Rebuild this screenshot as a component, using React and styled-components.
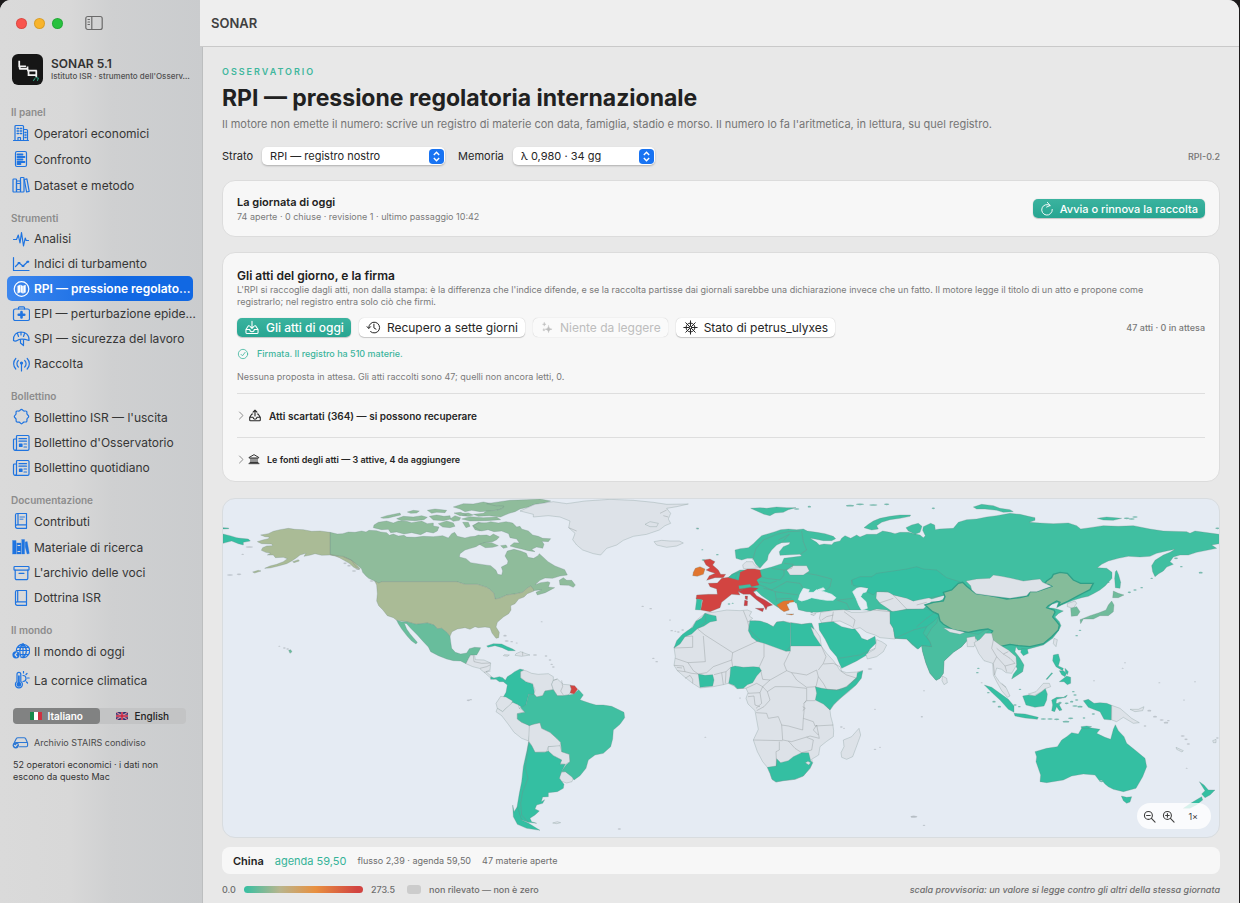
import React, { useState } from "react";
import styled, { createGlobalStyle } from "styled-components";

const GlobalStyle = createGlobalStyle`
  * {
    box-sizing: border-box;
  }
  html, body, #root {
    height: 100%;
  }
  body {
    margin: 0;
    background: #1c1a1b;
    font-family: Inter, "Liberation Sans", sans-serif;
    color: #262626;
    overflow: hidden;
  }
  button, select {
    font: inherit;
    color: inherit;
    border: 0;
    margin: 0;
    padding: 0;
    background: none;
  }
  h1, h2, h3, p {
    margin: 0;
  }
`;

/* ---------- icons ---------- */

const glyphs = {
  building: (
    <>
      <path d="M3 16.5V2.5a1 1 0 0 1 1-1h6.500a1 1 0 0 1 1 1v14M11.500 5.500h3a1 1 0 0 1 1 1v10M1.500 16.500h15M6 16.500v-3h2.500v3" />
      <path d="M5.200 4.500h1.300M8.300 4.500h1.300M5.200 7h1.300M8.300 7h1.300M5.200 9.500h1.300M8.300 9.500h1.300M13 8.500h1M13 11h1M13 13.500h1" strokeWidth="1.500" />
    </>
  ),
  doc: (
    <>
      <rect x="3.500" y="1.500" width="11" height="15" rx="1.500" />
      <path d="M5.500 4.500h5M5.500 7h7M5.500 9.500h5M5.500 12h7M5.500 14h3" strokeWidth="1.800" />
    </>
  ),
  books: (
    <>
      <rect x="1" y="3" width="3.500" height="13" rx=".8" />
      <rect x="4.500" y="5" width="4" height="11" rx=".8" />
      <rect x="8.500" y="1.500" width="3.500" height="14.500" rx=".8" />
      <path d="M12.300 3.500l2.600-.6 2.300 12.500-2.600.6zM5.500 7.500h2M5.500 13.500h2" />
    </>
  ),
  booksFill: (
    <>
      <path d="M.5 2.500h3.600V16H.5zM4.800 5h4.200V16H4.800zM9.700 1.500H12.600V16H9.700zM13.200 4l2-.4L17.300 15.500l-2.200.5L13.200 9z" fill="currentColor" strokeWidth=".3" />
      <path d="M6 7.500h1.800M6 13.500h1.800" stroke="#dcdcdc" />
    </>
  ),
  pulse: <path d="M1.500 9.500h3L6.300 5l1.700 8L9.500 2.500l2 13.500 1.700-8 1 2.500h2.300" />,
  chart: (
    <>
      <path d="M1.500 2.500v13h15.500M3.500 11.500l3.500-3.500 4 3 5-4.500" />
      <path d="M6.500 8h1M10.500 11h1M15.300 6.700h1" strokeWidth="2" />
    </>
  ),
  mapCircle: (
    <>
      <circle cx="9.500" cy="9" r="7.300" />
      <path d="M5.700 6l2.300-.9v7.200l-2.300.9zM8.700 5.100l2 .9v7.200l-2-.9zM11.300 6l2.200-.9v7.200l-2.200.9z" fill="currentColor" strokeWidth=".4" />
    </>
  ),
  medkit: (
    <>
      <rect x="1.500" y="4" width="16" height="11.500" rx="1.800" />
      <path d="M6.500 4V2.800a1 1 0 0 1 1-1h4a1 1 0 0 1 1 1V4" />
      <path d="M9.500 7v5.500M6.700 9.700h5.600" strokeWidth="2.600" />
    </>
  ),
  helmet: (
    <>
      <path d="M1.500 10.500C1 5 4.500 2 9 2s8.500 3 8 8.500M1.500 10.500c2 1.500 3.500 0 5-.8 3-1.200 6-.7 10.500.8M5.500 3.500l1 3M12.500 3.500l-1 3M9 2v3" />
      <path d="M8.500 10v3l3 2.500v-5.500" />
    </>
  ),
  antenna: (
    <>
      <path d="M9.500 9v7M6.300 12a4.500 4.500 0 0 1 0-6.500M12.700 12a4.500 4.500 0 0 0 0-6.500M3.800 14a7.500 7.500 0 0 1 0-10.500M15.200 14a7.500 7.500 0 0 0 0-10.500" />
      <circle cx="9.500" cy="8" r="1" fill="currentColor" />
    </>
  ),
  seal: (
    <path d="M9.500 1.300c1 0 1.400 1.400 2.300 1.700s2.100-.4 2.800.3 0 1.900.4 2.800 1.700 1.300 1.700 2.400-1.400 1.500-1.700 2.400.4 2.100-.4 2.800-1.900 0-2.800.4-1.300 1.700-2.300 1.700-1.400-1.400-2.300-1.700-2.100.4-2.800-.4 0-1.900-.4-2.800-1.700-1.300-1.700-2.400 1.400-1.500 1.700-2.400-.4-2.100.4-2.800 1.900 0 2.800-.3 1.300-1.700 2.300-1.700z" />
  ),
  news: (
    <>
      <path d="M4.500 14.500v-12a1 1 0 0 1 1-1h10.500a1 1 0 0 1 1 1v12.500a1.300 1.300 0 0 1-1.300 1.300H3.300A1.800 1.800 0 0 1 1.500 14.500V6a1 1 0 0 1 1-1h2" />
      <path d="M4.500 14.500a1.500 1.500 0 0 1-1.500 1.800M7 4.700h7.500M7 7.200h7.500M12 10h2.500M12 13h2.500" />
      <path d="M7.500 10h2.500v2.500H7.500z" fill="currentColor" />
    </>
  ),
  contrib: (
    <>
      <path d="M5 1.500h9.500v11.300H5A1.500 1.500 0 0 0 3.500 14.300V3A1.500 1.500 0 0 1 5 1.500zM3.500 14.500A1.700 1.700 0 0 0 5.200 16.300h9.300v-3.500M6 1.500v11" />
      <path d="M8 5h4.500M8 7.200h3" strokeWidth=".9" />
    </>
  ),
  archive: (
    <>
      <rect x="2" y="2.500" width="15" height="3.700" rx=".8" />
      <path d="M3.200 6.200v8a1.500 1.500 0 0 0 1.500 1.500h9.600a1.500 1.500 0 0 0 1.500-1.500v-8M7 9.300h5" />
    </>
  ),
  book: (
    <path d="M5 1.500h9.500v11.300H5A1.500 1.500 0 0 0 3.500 14.300V3A1.500 1.500 0 0 1 5 1.500zM3.500 14.500A1.700 1.700 0 0 0 5.200 16.300h9.300v-3.500M5.700 1.500v11" />
  ),
  globe: (
    <>
      <path d="M4.300 9A6.700 6.700 0 1 1 9 15.300M4.300 8.500h13M5.500 5.300h11M8 12.500h8.500M11 1.700v14M11 1.700c-4.500 4-3.500 9-2 13M11 1.700c4.500 4 4.500 10 0 14" />
      <circle cx="4" cy="12.800" r="3.600" fill="currentColor" stroke="none" />
      <path d="M4.700 11l-1.700 1.800 1.700 1.700" stroke="#dcdcdc" />
    </>
  ),
  thermo: (
    <>
      <path d="M5 10.500V3.200a1.900 1.900 0 0 1 3.800 0v7.300a3.500 3.500 0 1 1-3.800 0z" />
      <circle cx="6.900" cy="13.400" r="1.800" fill="currentColor" />
      <path d="M6.900 5v7" strokeWidth="1.700" />
      <path d="M11 4.500a3 3 0 0 1 0 6M11.500.5v1.500M15 2.500l-1 1M15.500 7h1.700M14.500 11l1 1" />
    </>
  ),
  drive: (
    <>
      <path d="M2.500 9l2-4a2 2 0 0 1 1.700-1h6.600a2 2 0 0 1 1.700 1l2 4.500v2.700a1.300 1.300 0 0 1-1.300 1.300H8M4 9h12" />
      <circle cx="4" cy="12" r="3.300" fill="currentColor" stroke="none" />
      <path d="M2.600 12l1 1 1.800-2" stroke="#dcdcdc" />
    </>
  ),
  sidebar: (
    <>
      <rect x=".8" y="2.500" width="16.400" height="13" rx="2" />
      <path d="M6.800 2.500v13M3 5.500h1.500M3 8h1.500M3 10.500h1.500" />
    </>
  ),
  trayDown: (
    <>
      <path d="M6 6.500H5L2.200 10.700v3.500a1 1 0 0 0 1 1h11.600a1 1 0 0 0 1-1v-3.500L13 6.500h-1M2.200 10.700h4.300a2.500 2.500 0 0 0 5 0h4.300" />
      <path d="M9 1.500v8M6.800 7.300L9 9.500l2.200-2.200" />
    </>
  ),
  trayUp: (
    <>
      <path d="M6 6.500H5L2.200 10.700v3.500a1 1 0 0 0 1 1h11.600a1 1 0 0 0 1-1v-3.500L13 6.500h-1M2.200 10.700h4.300a2.500 2.500 0 0 0 5 0h4.300" />
      <path d="M9 9V1.500M6.500 4L9 1.500 11.500 4" />
    </>
  ),
  history: <path d="M3.300 9.500A6.500 6.500 0 1 1 5.500 14M1.300 8l2 2.300L5.500 8M9.500 5v4.500l2.500 1.500" />,
  sparkle: (
    <g fill="currentColor" strokeWidth=".5">
      <path d="M11 6c.5 3 1.500 4 4.500 4.500-3 .5-4 1.500-4.500 4.500-.5-3-1.500-4-4.500-4.500 3-.5 4-1.500 4.500-4.500zM5.500 2c.3 1.500.8 2 2.300 2.300-1.500.3-2 .8-2.300 2.300-.3-1.500-.8-2-2.300-2.300 1.500-.3 2-.8 2.300-2.300zM5 10c.2 1 .5 1.300 1.500 1.500-1 .2-1.300.5-1.500 1.500-.2-1-.5-1.300-1.500-1.500 1-.2 1.300-.5 1.500-1.500z" />
    </g>
  ),
  helm: (
    <>
      <circle cx="9" cy="9" r="5.300" />
      <circle cx="9" cy="9" r="1.700" />
      <path d="M9 1v6.300M9 10.700V17M1 9h6.300M10.700 9H17M3.300 3.300l4.500 4.500M10.200 10.200l4.500 4.500M14.700 3.300l-4.500 4.500M7.800 10.200l-4.500 4.500" />
    </>
  ),
  refresh: <path d="M13 4.500A6.800 6.800 0 1 0 15.800 9.500M9.500.5l3.500 4-4.500 2" />,
  check: (
    <>
      <circle cx="9" cy="9" r="7" />
      <path d="M6 9.500l2.200 2.200L12.200 6.500" />
    </>
  ),
  bank: (
    <>
      <path d="M2 6.500L9 2.500l7 4v1H2zM1.500 16h15M3 14.200h12" />
      <path d="M4.500 8v5.500M7.500 8v5.500M10.500 8v5.500M13.500 8v5.500" />
    </>
  ),
  chevron: <path d="M5 2l7 7-7 7" />,
  zoomOut: (
    <>
      <circle cx="7.500" cy="7.500" r="5.500" />
      <path d="M11.700 11.700l5 5M5 7.500h5" />
    </>
  ),
  zoomIn: (
    <>
      <circle cx="7.500" cy="7.500" r="5.500" />
      <path d="M11.700 11.700l5 5M5 7.500h5M7.500 5v5" />
    </>
  ),
};

function Icon({ name, size = 18, weight = 1.2 }) {
  return (
    <Glyph viewBox="0 0 18 18" width={size} height={size} strokeWidth={weight} aria-hidden="true">
      {glyphs[name]}
    </Glyph>
  );
}

/* ---------- sidebar ---------- */

const groups = [
  {
    title: "Il panel",
    items: [
      { icon: "building", label: "Operatori economici", height: 26 },
      { icon: "doc", label: "Confronto", height: 26 },
      { icon: "books", label: "Dataset e metodo", height: 26 },
    ],
  },
  {
    title: "Strumenti",
    items: [
      { icon: "pulse", label: "Analisi" },
      { icon: "chart", label: "Indici di turbamento" },
      { icon: "mapCircle", label: "RPI — pressione regolato…" },
      { icon: "medkit", label: "EPI — perturbazione epide…" },
      { icon: "helmet", label: "SPI — sicurezza del lavoro" },
      { icon: "antenna", label: "Raccolta" },
    ],
  },
  {
    title: "Bollettino",
    items: [
      { icon: "seal", label: "Bollettino ISR — l'uscita", height: 26 },
      { icon: "news", label: "Bollettino d'Osservatorio" },
      { icon: "news", label: "Bollettino quotidiano" },
    ],
  },
  {
    title: "Documentazione",
    items: [
      { icon: "contrib", label: "Contributi", height: 26 },
      { icon: "booksFill", label: "Materiale di ricerca", height: 26 },
      { icon: "archive", label: "L'archivio delle voci" },
      { icon: "book", label: "Dottrina ISR" },
    ],
  },
  {
    title: "Il mondo",
    items: [
      { icon: "globe", label: "Il mondo di oggi", height: 26 },
      { icon: "thermo", label: "La cornice climatica", height: 32 },
    ],
  },
];

function Sidebar() {
  const [active, setActive] = useState("RPI — pressione regolato…");
  const [lang, setLang] = useState("it");

  return (
    <Side>
      <WindowBar>
        <Light color="#f9544d" aria-label="Chiudi" />
        <Light color="#f8b42c" aria-label="Riduci" />
        <Light color="#28c13e" aria-label="Ingrandisci" />
        <ToggleSide aria-label="Barra laterale">
          <Icon name="sidebar" size={18} />
        </ToggleSide>
      </WindowBar>

      <Brand>
        <Logo viewBox="0 0 30 30" aria-hidden="true">
          <rect width="30" height="30" rx="6" fill="#161616" />
          <path d="M7 6.500v5.500h6.500M7 14.500h8l.5 1.500h8.500M15 12v3M7.500 12v2.500M16 16v4.500h8M23.500 16v6.500" fill="none" stroke="#f2f2f2" strokeWidth="1.700" />
          <path d="M20.500 26l2-2.500M23 22.500l2.500 1-1 2.500" fill="none" stroke="#2f9c7d" />
        </Logo>
        <BrandText>
          <h2>SONAR 5.1</h2>
          <p>Istituto ISR · strumento dell'Osserv…</p>
        </BrandText>
      </Brand>

      <nav>
        {groups.map((group) => (
          <Group key={group.title}>
            <h3>{group.title}</h3>
            {group.items.map((item) => (
              <Item
                key={item.label}
                $height={item.height}
                $active={item.label === active}
                onClick={() => setActive(item.label)}
              >
                <Icon name={item.icon} />
                <span>{item.label}</span>
              </Item>
            ))}
          </Group>
        ))}
      </nav>

      <Languages>
        <Segment $on={lang === "it"} aria-pressed={lang === "it"} onClick={() => setLang("it")}>
          <svg viewBox="0 0 12 8" width="12" height="8" aria-hidden="true">
            <path d="M0 0h4v8H0z" fill="#168a4b" />
            <path d="M4 0h4v8H4z" fill="#fff" />
            <path d="M8 0h4v8H8z" fill="#cf3040" />
          </svg>
          Italiano
        </Segment>
        <Segment $on={lang === "en"} aria-pressed={lang === "en"} onClick={() => setLang("en")}>
          <svg viewBox="0 0 12 8" width="12" height="8" aria-hidden="true">
            <path d="M0 0h12v8H0z" fill="#2b2f6d" />
            <path d="M0 0l12 8M12 0L0 8" stroke="#d28a9d" strokeWidth="1.200" />
            <path d="M6 0v8M0 4h12" stroke="#dcb3c0" strokeWidth="2.300" />
            <path d="M6 0v8M0 4h12" stroke="#c4203d" strokeWidth="1.500" />
          </svg>
          English
        </Segment>
      </Languages>

      <Shared>
        <Icon name="drive" size={17} />
        Archivio STAIRS condiviso
      </Shared>
      <SideNote>52 operatori economici · i dati non escono da questo Mac</SideNote>
    </Side>
  );
}

/* ---------- world map ---------- */

const tone = {
  none: "#dde2e8",
  low: "#34bfa2",
  russia: "#40bfa1",
  india: "#4abea0",
  mexico: "#68bd9c",
  japan: "#70bb9b",
  canada: "#8fbc9b",
  china: "#85bc9a",
  usa: "#aabb96",
  orange: "#e1752f",
  red: "#d24441",
  italy: "#cb3d43",
  sea: "#e5ebf3",
};

// each sheet has its own origin, shapes are listed bottom to top
const sheets = [
  {
    at: [0, 0],
    shapes: [
      ["low", "9,117 30,122 50,128 62,130 85,132 91,138 70,142 70,150 55,146 35,138 20,142 9,145"],
      ["low", "9,98 26,99 26,101 9,102"],
      ["canada", "330,112 352,117 368,116 385,111 405,112 425,108 438,111 447,106 470,107 482,111 500,113 508,121 520,117 535,123 552,121 560,126 585,127 610,124 640,125 668,122 685,129 695,116 704,112 712,124 735,129 750,125 765,124 775,120 782,121 800,120 810,124 820,117 838,126 830,134 818,140 800,142 780,148 768,155 752,160 735,165 720,176 718,186 738,191 752,203 790,209 812,212 828,226 833,238 845,240 848,228 844,216 862,207 864,198 855,183 862,168 882,163 902,168 919,175 924,187 941,190 954,182 958,176 968,185 984,200 1005,213 1034,224 1042,240 1020,243 998,250 975,249 960,256 945,269 962,263 984,260 990,263 985,276 1004,278 976,293 952,300 948,292 965,284 940,287 932,273 918,282 908,292 884,297 860,300 838,310 825,312 822,295 808,282 800,277 772,268 735,268 710,260 485,260 478,266 462,257 446,250 438,243 428,232 425,222 412,210 395,198 378,188 355,184 330,179"],
      ["canada", "1018,256 1030,248 1040,256 1055,256 1066,270 1060,277 1046,271 1020,270"],
      ["canada", "462,90 475,82 500,78 520,84 535,78 560,79 575,83 605,78 622,86 640,84 640,93 657,96 652,108 640,114 620,110 602,119 575,113 552,117 530,111 512,113 505,103 485,104 460,98"],
      ["canada", "482,68 500,62 525,57 540,54 542,60 520,65 505,69 490,70"],
      ["canada", "530,71 550,64 580,66 605,62 622,67 612,74 585,77 560,76 545,77"],
      ["canada", "562,51 580,46 598,48 590,54 572,55"],
      ["canada", "622,46 645,42 680,46 675,53 650,52 635,55"],
      ["canada", "628,64 650,60 672,64 690,62 692,72 670,77 640,75"],
      ["canada", "655,86 680,78 700,84 705,94 690,98 668,96"],
      ["canada", "690,72 705,62 722,68 718,76 700,79"],
      ["canada", "700,36 730,26 760,27 790,21 815,26 830,32 850,28 858,35 838,44 810,48 780,50 755,46 735,50 720,42"],
      ["canada", "725,72 750,65 790,68 830,66 842,74 800,77 750,78"],
      ["canada", "720,56 745,54 760,60 745,64 728,62"],
      ["canada", "758,92 775,82 795,86 800,98 780,108 765,104"],
      ["canada", "728,82 745,82 750,94 738,98"],
      ["canada", "702,54 722,52 740,60 720,62"],
      ["canada", "800,26 840,20 870,16 920,14 960,12 992,18 970,25 940,29 925,36 900,42 885,50 868,55 855,60 842,66 808,62 775,64 760,58 790,55 800,48 830,46 848,40 852,33 825,32"],
      ["canada", "758,92 775,84 800,83 812,80 835,84 858,80 878,84 890,96 900,94 905,102 925,108 938,120 955,124 968,130 992,131 985,140 966,139 972,148 968,160 950,156 935,163 945,170 925,167 905,162 888,158 870,153 882,143 898,144 890,132 870,128 866,116 845,108 822,110 804,104 785,108 770,100"],
      ["canada", "778,148 795,142 815,143 835,152 818,157 796,158"],
      ["canada", "842,152 858,150 862,157 850,160"],
      ["usa", "330,112 300,108 275,109 250,104 225,103 205,100 180,104 160,109 145,116 122,120 135,125 148,126 145,131 128,135 112,140 125,146 155,147 158,152 140,153 128,158 124,166 137,172 152,175 142,180 160,180 166,188 190,187 202,191 190,200 170,208 150,213 134,220 150,219 175,213 200,206 215,198 230,188 240,180 258,175 252,184 272,180 285,176 305,181 330,180 345,183 358,188 372,196 388,205 400,216 414,224 420,222 408,206 392,194 370,184 355,183 330,178"],
      ["usa", "218,200 235,194 238,198 222,203"],
      ["usa", "98,231 115,226 123,228 104,234"],
      ["usa", "485,260 710,260 735,268 772,268 800,277 808,282 822,295 825,312 838,310 860,300 884,297 908,292 918,282 932,273 940,282 942,288 922,296 912,306 896,312 885,326 872,332 873,345 866,356 850,366 832,382 828,396 838,412 836,428 828,430 816,414 810,398 795,396 775,398 765,395 750,403 735,398 712,402 696,410 690,424 680,412 665,400 652,401 642,390 622,384 588,388 560,380 530,376 520,368 502,362 488,344 476,332 470,318 472,296 470,270 464,258 476,264"],
      ["mexico", "530,376 545,380 560,380 588,388 622,384 642,390 652,401 665,400 680,412 690,424 692,440 695,460 706,472 722,477 740,474 748,461 764,457 782,458 776,470 770,480 752,480 746,490 738,506 722,498 700,497 680,492 655,482 632,470 625,456 610,440 592,420 572,400 560,386 553,385 560,402 570,416 580,428 592,442 588,447 575,438 562,424 545,402 535,386"],
      ["none", "746,490 752,480 764,482 766,494 792,495 812,504 810,525 798,530 815,545 822,552 812,549 796,535 778,520 758,515 738,506"],
      ["low", "812,545 822,549 838,545 848,548 856,556 862,545 874,538 884,530 900,522 912,525 902,530 902,548 918,560 938,566 942,585 945,602 926,598 918,630 912,642 895,630 870,622 850,606 858,592 862,570 850,560 838,560 828,553 812,553"],
      ["low", "800,453 820,446 845,447 862,455 878,462 886,467 865,467 846,458 825,452 804,457"],
      ["none", "888,476 902,470 918,476 930,480 905,484 885,481"],
      ["none", "853,479 868,480 862,484 850,482"],
      ["none", "902,530 912,526 920,528 935,535 955,538 985,536 1000,545 1000,556 995,568 1000,584 975,588 968,602 950,606 942,598 945,585 938,566 918,560 902,548"],
      ["none", "1000,556 1012,552 1030,568 1052,570 1054,590 1044,600 1028,602 1012,602 1000,584 995,568"],
      ["none", "842,604 858,606 878,618 872,630 856,642 848,650 832,640 828,625"],
      ["none", "832,640 848,650 858,640 878,622 895,630 898,640 915,650 892,656 892,672 905,682 928,690 930,710 926,738 905,730 882,712 865,688 845,662 828,650"],
      ["none", "928,690 960,683 965,700 990,712 1010,730 1022,742 1020,755 985,755 980,770 945,772 935,752 926,738"],
      ["none", "985,755 1020,752 1025,770 1048,778 1050,800 1036,808 1020,806 1025,795 1000,782 985,770"],
      ["none", "1024,832 1036,830 1062,845 1056,860 1040,864 1022,858 1018,845"],
      ["russia", "898,640 918,630 926,598 942,598 950,606 968,602 975,588 1000,584 1012,602 1028,602 1044,600 1060,598 1076,584 1090,600 1080,614 1090,618 1110,625 1128,630 1150,630 1175,634 1198,645 1212,652 1214,668 1200,688 1180,705 1178,732 1172,755 1150,775 1125,780 1105,795 1098,820 1080,842 1062,855 1056,846 1036,830 1024,830 1038,810 1050,800 1048,778 1025,770 1022,742 1010,730 990,712 965,700 960,683 940,688 928,692 905,682 892,672 892,656 915,652 902,638"],
      ["low", "926,740 935,752 945,772 975,772 985,768 1000,782 1025,795 1020,808 1036,808 1024,832 1018,850 1032,868 1030,880 1012,890 985,893 985,905 968,906 964,920 974,914 968,925 950,930 945,942 958,948 945,960 930,970 935,980 950,985 925,982 905,975 888,960 892,930 898,895 905,860 910,815 920,770"],
      ["low", "878,930 882,950 892,935 905,975 925,984 950,1000 960,1006 920,1000 892,988 880,965"],
      ["red", "1050,571 1064,572 1073,583 1062,597 1050,594 1054,582"],
      ["none", "900,48 945,28 1000,20 1040,26 1095,18 1170,13 1240,16 1300,22 1340,28 1405,27 1370,35 1340,40 1352,55 1345,72 1352,85 1335,92 1318,105 1280,118 1240,124 1210,136 1190,150 1160,160 1142,180 1120,176 1088,165 1070,150 1058,134 1065,115 1046,98 1050,78 1020,66 985,62 940,66 940,58"],
      ["none", "1302,140 1325,136 1350,138 1378,138 1390,144 1370,153 1340,157 1310,150"],
      ["none", "1275,88 1290,80 1315,85 1310,95 1290,95"],
      ["none", "998,984 1012,980 1022,983 1010,986"],
      ["mexico", "206,466 212,464 216,470 210,475"],
    ],
    lines: [
      "1000,556 1012,552", "1025,556 1028,575 1022,588 1030,600", "760,482 762,500 785,505 812,504", "780,520 800,515 810,510", "792,532 812,528",
      "908,470 908,482", "926,740 922,775 916,820 924,850 908,890 902,925 905,960 925,982",
      "1046,98 1070,108", "1340,45 1320,55", "1330,62 1345,66",
      "370,186 395,196 405,212 418,224",
    ],
    specks: [
      [88, 156, 11], [68, 178, 4], [30, 240, 9], [57, 238, 7], [178, 454, 3], [193, 459, 4], [203, 462, 4], [375, 205, 5], [387, 212, 5], [402, 228, 6], [412, 222, 5], [455, 258, 6],
      [855, 422, 5], [860, 438, 6], [875, 440, 4], [945, 480, 6], [978, 483, 4], [990, 495, 4], [995, 508, 4], [1000, 516, 4], [745, 616, 5], [752, 614, 4], [1268, 334, 4], [1292, 341, 4], [1300, 490, 4], [1310, 500, 4], [1198, 1002, 5], [965, 380, 3], [890, 444, 3], [1432, 100, 5],
    ],
  },
  {
    at: [1320, 435],
    shapes: [
      ["none", "135,-80 165,-84 200,-90 240,-88 262,-90 275,-85 268,-72 278,-65 265,-55 285,-58 305,-55 340,-40 350,-54 370,-56 392,-52 425,-47 448,-50 455,-50 462,-35 480,-10 484,18 500,40 520,62 532,78 540,92 560,98 590,96 608,92 603,112 590,132 570,152 545,172 525,190 510,210 512,228 518,250 521,272 520,290 500,304 480,320 476,345 455,358 458,368 450,385 430,408 405,418 370,422 348,426 336,418 330,400 322,382 308,365 292,335 280,300 295,268 290,240 285,212 264,192 258,175 264,158 258,145 230,146 222,138 205,130 190,134 160,140 120,144 98,130 75,112 52,92 42,76 46,50 42,22 70,-10 95,-38 110,-60"],
      ["low", "135,-80 150,-76 168,-72 170,-58 150,-54 132,-42 112,-34 95,-18 75,-10 60,12 42,24 50,2 66,-16 82,-28 98,-38 108,-56 125,-66"],
      ["low", "270,-58 300,-57 322,-50 340,-40 350,-54 370,-56 392,-50 391,33 378,34 312,10 290,4 275,-8 265,-28 268,-48"],
      ["low", "392,-52 425,-47 448,-50 455,-50 462,-32 452,-40 462,-15 484,18 392,18"],
      ["low", "212,82 225,78 250,82 280,80 298,82 304,92 290,108 278,128 262,134 250,145 232,146 222,136 206,130 210,108"],
      ["low", "115,102 135,106 158,104 162,120 158,138 120,142 118,125"],
      ["low", "466,140 485,145 505,148 530,150 560,140 590,112 592,98 608,92 604,115 588,135 560,158 535,180 520,195 510,210 490,192 466,180 470,160"],
      ["low", "322,382 348,378 350,356 362,368 385,362 400,350 425,338 446,338 452,362 458,368 450,385 430,408 405,418 370,422 348,426 336,418 330,400"],
      ["none", "597,265 602,285 590,318 578,350 560,358 545,352 543,338 552,320 550,300 575,290 588,275"],
      ["none", "436,368 444,364 452,368 446,375"],
    ],
    lines: [
      "135,-80 138,-55 112,-34 135,-15 218,38 300,0 270,-28 262,-58 250,-88",
      "75,-10 98,-12 98,22 42,24", "130,-12 136,65 84,68 46,55", "218,38 215,60 160,80 140,98 115,102 100,92 84,68", "215,60 218,80",
      "312,10 312,50 298,80", "391,33 372,72 380,92 330,120 308,118 302,90", "392,18 378,34", "380,92 395,98 410,100 440,105 470,90 475,110 468,140",
      "484,18 498,50 490,70 475,90", "475,110 490,130 500,148 545,150 592,115 560,105 545,95 540,80 520,70 490,72",
      "395,98 410,120 440,142 468,140", "330,120 308,140 322,155 345,140 390,140 440,145 440,180 432,190 432,215 430,235",
      "258,145 290,130 308,140 300,158 264,160", "300,158 305,190 288,205", "322,155 330,180 312,200 290,212", "288,218 320,220 325,235 355,230 365,255 385,258 428,270 430,235 460,245 465,258 520,255",
      "365,255 368,300 395,305 450,288 478,295 470,255 460,270 475,285", "280,300 368,302", "358,305 358,330 348,335 350,380", "385,303 405,325 425,338 455,330 460,300 440,292",
      "432,190 440,182 466,182", "510,210 500,200", "42,76 70,78 75,95 52,92", "75,95 95,100 115,102", "75,115 90,106 98,118 98,130",
      "162,104 185,98 190,134", "185,98 198,95 196,130", "198,95 212,82", "50,82 66,84",
      "264,170 282,168 285,195 300,200", "428,200 436,205 428,212",
    ],
    specks: [[30, -60, 3], [35, -28, 4], [46, -26, 3], [55, -24, 4], [68, -30, 4], [240, 174, 3], [630, 87, 7], [544, 261, 4], [552, 265, 3], [645, 328, 4], [660, 322, 3], [645, 208, 3], [785, 230, 3], [136, 292, 3], [762, 530, 10]],
  },
  {
    at: [1320, 0],
    shapes: [
      // continental block, everything the registry scores low
      ["russia", "225,165 240,161 265,158 280,146 292,134 305,122 325,116 345,110 362,104 385,102 410,104 430,102 442,108 470,112 495,116 520,124 527,131 515,137 490,137 465,132 450,130 470,142 478,150 492,147 515,149 522,142 540,138 545,130 555,122 572,130 590,120 600,126 620,118 650,118 668,108 690,112 705,116 720,112 745,112 770,118 780,120 790,128 796,122 788,106 790,95 812,85 824,90 826,104 838,102 880,100 895,82 920,74 950,72 980,66 1010,62 1050,55 1080,58 1105,64 1125,68 1125,76 1108,82 1140,84 1180,86 1225,84 1250,92 1262,102 1290,98 1330,92 1375,94 1420,92 1470,102 1510,108 1580,110 1590,115 1605,108 1678,118 1678,146 1655,150 1670,160 1640,166 1610,172 1585,180 1560,180 1540,186 1530,200 1540,208 1520,216 1510,228 1496,236 1485,245 1478,230 1475,212 1485,196 1510,180 1530,172 1545,163 1520,168 1490,175 1470,184 1440,186 1405,184 1375,190 1345,198 1325,208 1312,218 1340,220 1356,232 1356,250 1336,272 1320,285 1300,296 1285,304 1265,308 1240,316 1225,322 1205,330 1190,338 1195,322 1175,328 1165,338 1180,340 1190,342 1210,348 1195,356 1185,366 1198,380 1203,392 1195,408 1178,430 1150,450 1120,458 1095,465 1075,465 1068,455 1065,470 1080,490 1092,510 1088,530 1070,542 1055,552 1060,538 1072,522 1062,500 1045,480 1020,465 990,440 950,430 925,432 905,455 880,472 852,498 850,535 840,550 828,556 810,535 798,505 788,470 785,452 772,462 755,448 740,432 705,430 692,400 690,350 640,350 620,345 550,345 500,349 470,352 440,350 415,344 410,325 385,320 372,345 352,336 340,328 325,316 305,302 290,288 270,292 240,290 205,248 215,238 240,225 300,225 335,216 365,206 372,190 425,183 420,178 360,181 358,170 370,155 388,148 390,142 365,143 350,150 335,165 325,180 322,195 310,208 300,220 288,208 278,190 262,190 245,195 228,190"],
      // northern islands
      ["russia", "612,98 625,88 640,78 660,70 690,64 720,60 752,60 750,64 720,70 690,74 665,82 650,92 655,102 635,105"],
      ["russia", "272,40 300,38 320,40 350,36 380,38 408,38 385,44 370,52 345,54 330,62 312,58 295,50"],
      ["russia", "738,98 755,90 775,85 786,94 780,112 765,118 745,108"],
      ["russia", "940,36 965,28 1000,32 1020,40 1050,44 1060,50 1030,52 1010,46 975,42 950,42"],
      ["russia", "1312,70 1340,66 1385,70 1360,76 1330,75"],
      ["russia", "1370,226 1376,240 1382,262 1380,280 1366,278 1364,250 1366,230"],
      // seas cut back out of the block
      ["sea", "415,314 420,298 430,280 448,284 445,292 460,292 470,284 492,290 515,298 528,308 520,316 500,316 475,312 455,308 440,314 425,318", 1],
      ["sea", "474,284 490,278 495,284 480,288", 1],
      ["sea", "578,290 590,280 612,275 625,280 620,290 608,294 602,305 618,320 622,340 605,346 596,330 588,310", 1],
      ["none", "650,290 690,292 705,300 742,308 760,318 775,310 800,305 815,312 855,300 850,312 835,322 815,320 800,332 790,342 740,342 700,352 660,325 648,310"],
      ["none", "482,352 520,346 552,344 575,352 600,352 622,350 650,342 680,345 690,350 692,385 700,400 705,432 660,428 645,420 620,412 600,398 585,402 570,392 540,378 515,380 485,384 478,370"],
      ["low", "476,385 500,382 520,380 545,395 575,402 585,402 598,418 605,430 622,436 645,424 648,445 630,462 620,480 590,498 545,520 536,500 530,485 510,462 495,432 478,405"],
      ["none", "650,434 665,440 680,450 670,470 650,485 622,492 618,478 645,462"],
      ["none", "380,225 400,212 440,212 448,228 430,240 390,240"],
      ["none", "248,210 258,200 278,200 285,212 300,218 262,222 250,220"],
      ["low", "690,350 740,344 800,342 825,350 840,360 820,380 800,395 790,415 810,440 815,455 785,452 775,462 760,448 740,432 705,430 700,400 690,385"],
      ["low", "575,255 600,245 635,245 650,235 700,228 740,222 770,215 790,222 830,225 860,248 905,262 890,278 870,295 845,302 800,310 760,318 740,310 700,300 680,288 650,290 640,300 620,290 625,280 600,275 580,272"],
      ["india", "815,455 810,440 800,425 815,400 830,385 835,370 850,362 860,378 880,395 920,412 955,418 975,405 990,402 975,420 955,445 948,430 925,432 905,455 880,472 852,498 850,535 840,550 828,556 810,535 798,505 788,470 785,452"],
      ["china", "795,330 820,322 850,318 855,305 850,292 875,285 895,265 908,262 920,274 938,288 948,296 990,302 1020,308 1040,312 1080,308 1105,302 1110,290 1130,290 1158,280 1175,274 1165,268 1152,268 1160,258 1175,248 1180,238 1200,232 1222,235 1240,255 1262,265 1300,265 1290,284 1270,294 1255,302 1225,318 1195,332 1200,322 1190,318 1165,332 1160,338 1182,345 1185,352 1178,366 1190,380 1198,390 1195,405 1175,425 1150,446 1110,455 1075,452 1050,448 1018,455 1000,438 990,420 998,408 984,402 960,405 925,412 880,405 850,388 840,378 835,358 818,350", 2],
      ["none", "918,258 950,252 990,250 1000,240 1025,244 1055,250 1090,258 1120,254 1140,252 1148,262 1175,274 1158,280 1130,290 1110,290 1100,302 1050,310 990,302 948,296 935,284 932,272"],
      ["none", "850,398 875,402 915,412 900,418 870,412"],
      ["none", "920,428 945,424 948,440 942,455 922,455"],
      ["none", "1222,326 1245,318 1250,325 1240,340 1222,335"],
      ["japan", "1232,340 1250,335 1260,350 1252,362 1234,364"],
      ["japan", "1355,318 1362,330 1360,350 1345,362 1320,362 1300,372 1270,372 1262,386 1260,374 1290,362 1315,354 1338,345 1345,330"],
      ["japan", "1360,288 1375,295 1392,300 1375,308 1358,308"],
      ["low", "1085,460 1102,462 1105,475 1090,482 1082,472"],
      ["none", "1182,430 1192,434 1188,455 1180,446"],
      // western Europe
      ["red", "145,265 172,264 185,250 205,247 235,255 240,232 262,222 285,222 300,225 305,245 290,255 298,270 275,275 258,280 235,290 240,300 215,298 185,322 180,338 150,350 122,345 128,315 108,312 110,300 145,298 172,298 170,282 150,275"],
      ["red", "130,195 150,192 165,200 158,210 175,225 182,238 197,238 190,248 165,248 140,256 148,242 165,235 150,230 138,225 150,218 138,210"],
      ["orange", "100,232 106,220 120,215 135,222 130,238 112,244 98,242"],
      ["low", "110,312 126,314 122,345 106,344"],
      ["low", "205,247 222,236 240,232 236,255"],
      ["italy", "235,290 250,282 268,276 295,280 280,290 290,302 315,315 338,330 322,335 318,345 310,330 290,315 270,298 250,298"],
      ["italy", "286,340 312,340 308,350"],
      ["italy", "254,315 263,318 262,332 252,332"],
      ["italy", "255,303 263,303 262,314 256,312"],
      ["russia", "236,272 270,268 275,276 238,282"],
      ["orange", "350,330 370,318 400,315 402,322 380,328 388,345 372,350 360,342"],
      ["orange", "378,357 402,357 395,360"],
      ["sea", "388,324 404,322 412,345 396,345", 1],
      ["none", "452,358 468,355 462,362"],
    ],
    lines: [
      "278,195 288,160 310,135 350,118 385,110 420,108", "355,135 388,118 365,143", "425,108 430,140 440,165 420,178", "372,205 400,208 395,220 372,225 335,220", "300,245 320,250 360,255 372,240 372,225",
      "440,235 470,240 515,252 510,275 500,285", "298,260 330,265 350,258", "310,280 335,285 380,260 420,265 430,280", "300,270 320,278 345,290 350,320", "345,290 415,300", "350,312 395,310", "530,315 560,325 570,345",
      "535,315 580,310", "655,325 700,310", "700,300 740,342", "770,330 800,322", "520,350 515,380", "552,350 585,375 580,395", "485,375 500,365 520,360",
      "690,350 640,345", "705,430 760,405 800,395", "535,490 600,480 645,460", "770,395 800,370 825,352", "575,255 575,270",
      "235,230 225,250 235,256",
    ],
    specks: [[113, 101, 4], [127, 164, 3], [172, 179, 4], [130, 195, 5], [207, 327, 4], [218, 325, 3], [448, 35, 5], [455, 352, 4], [410, 42, 8], [570, 32, 12], [600, 28, 12], [640, 30, 12], [680, 28, 8], [820, 40, 5], [1400, 70, 9], [1425, 66, 8], [1415, 72, 9], [1408, 292, 5], [1425, 285, 5], [1445, 278, 4], [1475, 250, 4], [1548, 190, 6], [1564, 215, 4], [1622, 233, 6], [1672, 100, 6], [1260, 406, 4], [1250, 422, 4], [1345, 262, 4]],
  },
  {
    at: [2040, 435],
    shapes: [
      ["none", "222,8 240,-2 256,-20 275,-20 280,0 300,15 325,30 348,50 350,75 335,100 318,98 305,88 290,84 284,105 300,128 318,142 330,168 322,172 305,152 290,125 280,105 278,70 252,62 236,40"],
      ["none", "127,108 140,115 142,128 132,134 126,122"],
      ["low", "253,135 275,142 300,160 325,178 342,198 342,217 325,208 300,180 278,160"],
      ["low", "342,220 375,222 415,232 412,238 375,234 345,228"],
      ["none", "385,162 408,155 430,130 448,130 452,140 436,146 425,155 400,168"],
      ["low", "368,168 385,165 405,168 425,155 436,146 442,162 440,180 432,198 405,202 378,195"],
      ["low", "455,180 470,172 490,172 502,165 498,172 470,178 468,190 482,190 478,195 486,210 478,212 470,200 464,215 455,212 458,195"],
      ["low", "460,45 475,42 480,60 475,78 490,85 488,92 468,80 458,62"],
      ["low", "478,125 500,108 512,112 512,130 502,134 492,125"],
      ["low", "478,92 490,92 500,100 495,110 485,104"],
      ["low", "495,85 505,95 502,104 496,95"],
      ["low", "438,118 455,98 458,100 442,118"],
      ["low", "550,182 565,178 582,190 600,188 620,190 635,196 634,240 612,238 600,215 580,208 565,202"],
      ["none", "635,196 660,205 680,222 695,235 718,248 700,250 670,232 650,245 635,240"],
      ["none", "690,208 715,208 732,200 728,212 705,215"],
      ["low", "405,335 440,325 472,320 485,300 500,290 515,278 535,282 545,265 560,262 600,268 590,280 615,292 632,298 640,268 646,254 655,272 672,290 680,310 705,330 735,355 740,380 728,410 708,445 670,455 640,448 625,440 615,432 605,420 598,422 585,405 550,402 515,408 490,420 440,428 420,425 422,405 408,365 410,350"],
      ["low", "664,468 680,472 695,470 690,486 680,490 670,482"],
      ["low", "898,425 912,435 925,450 945,450 930,465 915,473 905,462 915,452"],
      ["low", "905,470 908,480 890,494 870,505 850,505 872,490 892,478"],
      ["low", "543,260 560,258 575,260 560,266 545,265"],
      ["none", "828,322 850,332 846,336 830,328"],
      ["none", "938,302 948,298 948,308 940,308"],
    ],
    lines: ["280,0 275,25 290,50 280,70 284,105", "290,25 310,42 325,35", "310,42 330,55 345,70 315,78 320,95", "290,50 315,78", "305,130 318,142"],
    specks: [[235, 85, 4], [232, 98, 4], [360, 148, 4], [430, 237, 8], [450, 237, 8], [470, 238, 8], [498, 245, 10], [512, 235, 8], [540, 200, 8], [525, 198, 8], [515, 185, 5], [500, 190, 6], [480, 188, 5], [525, 165, 5], [530, 180, 5], [520, 155, 4], [580, 222, 5], [552, 234, 4], [265, 158, 4], [282, 185, 5], [298, 200, 5], [345, 195, 5], [358, 200, 4], [605, 424, 7]],
  },
  {
    // Pacific and southern islets
    at: [2040, 435],
    pale: true,
    shapes: [],
    lines: [],
    specks: [[748, 212, 6], [765, 230, 6], [785, 240, 6], [798, 248, 7], [805, 242, 4], [848, 288, 6], [858, 298, 5], [865, 312, 5], [735, 258, 4], [852, 180, 3], [885, 125, 3], [668, 85, 3], [675, 68, 3], [582, 122, 3], [778, 128, 3], [860, 385, 3], [40, 530, 8], [72, 556, 4], [952, 294, 4], [66, 230, 3], [72, 152, 3], [245, 128, 3]],
  },
];

function WorldMap() {
  return (
    <MapSvg viewBox="9 12 2988 1014" role="img" aria-label="Mappa mondiale RPI">
      {sheets.map((sheet, i) => (
        <g key={i} transform={`translate(${sheet.at[0]} ${sheet.at[1]})`}>
          {sheet.shapes.map(([fill, points, edge], j) => (
            <polygon
              key={j}
              points={points}
              fill={tone[fill]}
              stroke={edge === 2 ? "#2f9f88" : edge === 1 ? tone.sea : "#6b8583"}
              strokeOpacity={edge ? 1 : 0.4}
              strokeWidth={edge === 2 ? 4 : 2}
            />
          ))}
          {sheet.lines.map((points) => (
            <polyline key={points} points={points} fill="none" stroke="#7d8788" strokeOpacity="0.5" strokeWidth="2" />
          ))}
          {sheet.specks.map(([x, y, w], j) => (
            <ellipse
              key={j}
              cx={x}
              cy={y}
              rx={w}
              ry={Math.min(w * 0.5, 2.5)}
              fill={i > 1 && !sheet.pale ? "#5fae9d" : "#b4bcc2"}
              fillOpacity="0.8"
            />
          ))}
        </g>
      ))}
    </MapSvg>
  );
}

/* ---------- page ---------- */

function Picker({ label, id, width, options }) {
  return (
    <Field>
      <label htmlFor={id}>{label}</label>
      <SelectWrap $width={width}>
        <select id={id}>
          {options.map((o) => (
            <option key={o}>{o}</option>
          ))}
        </select>
        <Stepper viewBox="0 0 14 14" aria-hidden="true">
          <rect width="14" height="14" rx="3.500" fill="#1873f2" />
          <path d="M4.500 5.500L7 3l2.500 2.500M4.500 8.500L7 11l2.500-2.500" fill="none" stroke="#fff" strokeWidth="1.300" />
        </Stepper>
      </SelectWrap>
    </Field>
  );
}

export default function App() {
  return (
    <>
      <GlobalStyle />
      <Window>
        <Sidebar />
        <Main>
          <Toolbar>SONAR</Toolbar>
          <Content>
            <Eyebrow>OSSERVATORIO</Eyebrow>
            <Title>RPI — pressione regolatoria internazionale</Title>
            <Lead>
              Il motore non emette il numero: scrive un registro di materie con data, famiglia, stadio e morso. Il numero lo fa
              l'aritmetica, in lettura, su quel registro.
            </Lead>

            <Controls>
              <Picker label="Strato" id="strato" width={183} options={["RPI — registro nostro"]} />
              <Picker label="Memoria" id="memoria" width={142} options={["λ 0,980 · 34 gg"]} />
              <Version>RPI-0.2</Version>
            </Controls>

            <Card>
              <Spread>
                <div>
                  <CardTitle>La giornata di oggi</CardTitle>
                  <Small>74 aperte · 0 chiuse · revisione 1 · ultimo passaggio 10:42</Small>
                </div>
                <Button $primary $compact>
                  <Icon name="refresh" size={14} />
                  Avvia o rinnova la raccolta
                </Button>
              </Spread>
            </Card>

            <Card $tall>
              <CardTitle $large>Gli atti del giorno, e la firma</CardTitle>
              <Intro>
                L'RPI si raccoglie dagli atti, non dalla stampa: è la differenza che l'indice difende, e se la raccolta partisse dai
                giornali sarebbe una dichiarazione invece che un fatto. Il motore legge il titolo di un atto e propone come registrarlo;
                nel registro entra solo ciò che firmi.
              </Intro>
              <Actions>
                <Button $primary>
                  <Icon name="trayDown" size={16} />
                  Gli atti di oggi
                </Button>
                <Button>
                  <Icon name="history" size={15} />
                  Recupero a sette giorni
                </Button>
                <Button disabled>
                  <Icon name="sparkle" size={14} />
                  Niente da leggere
                </Button>
                <Button>
                  <Icon name="helm" size={15} />
                  Stato di petrus_ulyxes
                </Button>
                <Count>47 atti · 0 in attesa</Count>
              </Actions>
              <Signed>
                <Icon name="check" size={12} />
                Firmata. Il registro ha 510 materie.
              </Signed>
              <Small>Nessuna proposta in attesa. Gli atti raccolti sono 47; quelli non ancora letti, 0.</Small>
              <Disclosure>
                <Chevron><Icon name="chevron" size={9} weight={2} /></Chevron>
                <Icon name="trayUp" size={14} weight={1.4} />
                Atti scartati (364) — si possono recuperare
              </Disclosure>
              <Disclosure $small>
                <Chevron><Icon name="chevron" size={9} weight={2} /></Chevron>
                <Icon name="bank" size={12} weight={1.4} />
                Le fonti degli atti — 3 attive, 4 da aggiungere
              </Disclosure>
            </Card>

            <MapPanel>
              <WorldMap />
              <ZoomBar>
                <button aria-label="Riduci mappa"><Icon name="zoomOut" size={13} weight={1.5} /></button>
                <button aria-label="Ingrandisci mappa"><Icon name="zoomIn" size={13} weight={1.5} /></button>
                <span>1×</span>
              </ZoomBar>
            </MapPanel>

            <Readout>
              <strong>China</strong>
              <em>agenda 59,50</em>
              <span>flusso 2,39 · agenda 59,50</span>
              <span>47 materie aperte</span>
            </Readout>

            <Legend>
              <span>0.0</span>
              <Ramp />
              <span>273.5</span>
              <Swatch />
              <span>non rilevato — non è zero</span>
              <i>scala provvisoria: un valore si legge contro gli altri della stessa giornata</i>
            </Legend>
          </Content>
        </Main>
      </Window>
    </>
  );
}

const Glyph = styled.svg`
  flex: none;
  display: block;
  fill: none;
  stroke: currentColor;
  stroke-linecap: round;
  stroke-linejoin: round;
`;

const Window = styled.div`
  display: flex;
  min-height: 100%;
  margin-right: 1px;
  border-radius: 11px 11px 0 0;
  overflow: hidden;
  background: #e8e8e8;
`;

const Side = styled.aside`
  flex: none;
  width: 203px;
  border-right: 1px solid #bcbebf;
  background: linear-gradient(90deg, #dadada 0, #d8d8d8 70px, #cfd0d1 112px, #caccce 203px);
`;

const WindowBar = styled.div`
  display: flex;
  align-items: center;
  gap: 7px;
  height: 46px;
  padding-left: 16px;
`;

const Light = styled.button`
  width: 11px;
  height: 11px;
  border-radius: 50%;
  background: ${(props) => props.color};
  box-shadow: inset 0 0 0 1px rgba(0, 0, 0, 0.12);
`;

const ToggleSide = styled.button`
  margin-left: 15px;
  color: #6a6a6a;
`;

const Brand = styled.div`
  display: flex;
  align-items: center;
  gap: 8px;
  height: 46px;
  padding: 0 8px 0 12px;
`;

const Logo = styled.svg`
  flex: none;
  width: 31px;
  height: 31px;
`;

const BrandText = styled.div`
  min-width: 0;
  h2 {
    font-size: 12px;
    line-height: 15px;
    font-weight: 600;
    color: #333;
  }
  p {
    font-size: 8px;
    line-height: 11px;
    font-weight: 500;
    color: #505050;
    white-space: nowrap;
  }
`;

const Group = styled.section`
  margin: 12px 9px 0 7px;
  h3 {
    padding-left: 4px;
    font-size: 10px;
    line-height: 16px;
    font-weight: 600;
    color: #8c8c8c;
  }
`;

const Item = styled.button`
  display: flex;
  align-items: center;
  gap: 4px;
  width: 100%;
  height: ${(props) => props.$height || 25}px;
  padding-left: 5px;
  border-radius: 5px;
  font-size: 12px;
  text-align: left;
  white-space: nowrap;
  color: ${(props) => (props.$active ? "#fff" : "#363636")};
  font-weight: ${(props) => (props.$active ? 600 : 400)};
  background: ${(props) => (props.$active ? "linear-gradient(90deg, #3d87ee, #1168e3 60%)" : "none")};

  svg {
    color: ${(props) => (props.$active ? "#fff" : "#1f74e0")};
  }
`;

const Languages = styled.div`
  display: grid;
  grid-template-columns: 1fr 1fr;
  margin: 12px 16px 0 13px;
  border-radius: 4px;
  background: #c3c4c5;
`;

const Segment = styled.button`
  display: flex;
  align-items: center;
  justify-content: center;
  gap: 6px;
  height: 16px;
  border-radius: 4px;
  font-size: 10px;
  font-weight: ${(props) => (props.$on ? 600 : 500)};
  color: ${(props) => (props.$on ? "#fff" : "#222")};
  background: ${(props) => (props.$on ? "#818282" : "none")};
`;

const Shared = styled.p`
  display: flex;
  align-items: center;
  gap: 5px;
  height: 18px;
  margin: 9px 0 8px 12px !important;
  font-size: 9px;
  color: #4a4a4a;
  svg {
    color: #2d78d4;
  }
`;

const SideNote = styled.p`
  padding: 0 20px 0 13px;
  font-size: 9px;
  line-height: 12px;
  color: #333;
`;

const Main = styled.main`
  flex: 1;
  min-width: 0;
`;

const Toolbar = styled.header`
  position: relative;
  display: flex;
  align-items: center;
  height: 47px;
  margin-left: -3px;
  padding-left: 11px;
  border-bottom: 1px solid #c9c9c9;
  background: #eeeeee;
  font-size: 13px;
  font-weight: 600;
  color: #404040;
`;

const Content = styled.div`
  padding: 17px 19px 0;
`;

const Eyebrow = styled.p`
  font-size: 9px;
  line-height: 16px;
  font-weight: 600;
  letter-spacing: 2px;
  color: #3fb79d;
`;

const Title = styled.h1`
  margin-top: 3px !important;
  font-size: 23px;
  line-height: 30px;
  font-weight: 700;
  color: #212121;
`;

const Lead = styled.p`
  margin-top: 3px !important;
  font-size: 11px;
  line-height: 16px;
  color: #757575;
`;

const Controls = styled.div`
  display: flex;
  align-items: center;
  gap: 13px;
  height: 20px;
  margin-top: 14px;
`;

const Field = styled.div`
  display: flex;
  align-items: center;
  gap: 9px;
  font-size: 11px;
`;

const SelectWrap = styled.div`
  display: grid;
  align-items: center;
  width: ${(props) => props.$width}px;
  height: 18px;
  border-radius: 5px;
  background: #fff;
  box-shadow: 0 1px 2px rgba(0, 0, 0, 0.25);

  select,
  svg {
    grid-area: 1 / 1;
  }
  select {
    appearance: none;
    height: 18px;
    padding-left: 8px;
  }
`;

const Stepper = styled.svg`
  width: 15px;
  height: 15px;
  margin-right: 1px;
  justify-self: end;
  pointer-events: none;
`;

const Version = styled.span`
  margin-left: auto;
  font-size: 9px;
  font-weight: 500;
  color: #757575;
`;

const Card = styled.section`
  margin-top: ${(props) => (props.$tall ? 15 : 14)}px;
  padding: ${(props) => (props.$tall ? "14px 14px 1px" : "13px 14px")};
  border: 1px solid #dcdcdc;
  border-radius: 13px;
  background: #f7f7f7;
`;

const Spread = styled.div`
  display: flex;
  align-items: center;
  justify-content: space-between;
`;

const CardTitle = styled.h2`
  font-size: ${(props) => (props.$large ? 12 : 11)}px;
  line-height: 17px;
  font-weight: 600;
  color: #212121;
`;

const Small = styled.p`
  font-size: 9px;
  line-height: 12px;
  color: #7a7a7a;
`;

const Intro = styled(Small)`
  padding-right: 20px;
`;

const Button = styled.button`
  display: flex;
  align-items: center;
  gap: 6px;
  height: 19px;
  padding: 0 7px;
  border-radius: 5px;
  font-size: ${(props) => (props.$compact ? 11 : 12)}px;
  white-space: nowrap;
  font-weight: ${(props) => (props.$primary ? 500 : 400)};
  color: ${(props) => (props.$primary ? "#fff" : "#262626")};
  background: ${(props) => (props.$primary ? "linear-gradient(#3bb39f, #27a591)" : "#fff")};
  box-shadow: 0 0 1px rgba(0, 0, 0, 0.25), 0 1px 1px rgba(0, 0, 0, 0.18);

  &:disabled {
    color: #bdbdbd;
    background: #fafafa;
    box-shadow: 0 0 1px rgba(0, 0, 0, 0.25);
  }
`;

const Actions = styled.div`
  display: flex;
  align-items: center;
  gap: 8px;
  margin-top: 10px;
`;

const Count = styled.span`
  margin-left: auto;
  font-size: 9px;
  font-weight: 500;
  color: #7a7a7a;
`;

const Signed = styled.p`
  display: flex;
  align-items: center;
  gap: 8px;
  margin: 11px 0 11px !important;
  font-size: 9px;
  line-height: 12px;
  font-weight: 500;
  color: #3cb59d;
`;

const Disclosure = styled.button`
  display: flex;
  align-items: center;
  gap: 7px;
  width: 100%;
  height: ${(props) => (props.$small ? 43 : 44)}px;
  border-top: 1px solid #dedede;
  font-size: ${(props) => (props.$small ? 9 : 10)}px;
  font-weight: 600;
  text-align: left;
  color: #262626;

  ${Small} + & {
    margin-top: 10px;
  }
`;

const Chevron = styled.span`
  margin-right: -5px;
  color: #8c8c8c;
`;

const MapPanel = styled.section`
  position: relative;
  margin-top: 16px;
  border: 1px solid #d8dcdf;
  border-radius: 13px;
  background: #e5ebf3;
  overflow: hidden;
`;

const MapSvg = styled.svg`
  display: block;
  width: 100%;
  height: auto;
`;

const ZoomBar = styled.div`
  position: absolute;
  right: 8px;
  bottom: 8px;
  display: flex;
  align-items: center;
  gap: 6px;
  height: 26px;
  padding: 0 13px 0 6px;
  border-radius: 13px;
  background: rgba(255, 255, 255, 0.8);
  font-size: 9px;
  color: #3d3d3d;
  span {
    margin-left: 7px;
  }
`;

const Readout = styled.section`
  display: flex;
  align-items: center;
  gap: 11px;
  height: 27px;
  margin-top: 9px;
  padding: 0 11px;
  border-radius: 8px;
  background: #f7f7f7;
  font-size: 9px;
  color: #6d6d6d;

  strong {
    font-size: 11px;
    font-weight: 600;
    color: #222;
  }
  em {
    font-size: 11px;
    font-style: normal;
    color: #35b398;
  }
`;

const Legend = styled.footer`
  display: flex;
  align-items: center;
  gap: 8px;
  height: 16px;
  margin-top: 7px;
  font-size: 9px;
  font-weight: 500;
  color: #6d6d6d;
  i {
    margin-left: auto;
  }
`;

const Ramp = styled.span`
  width: 119px;
  height: 7px;
  border-radius: 4px;
  background: linear-gradient(90deg, #34bfa2, #b8b58d 30%, #e89040 60%, #d24441 95%);
`;

const Swatch = styled.span`
  width: 14px;
  height: 9px;
  margin-left: 4px;
  border-radius: 3px;
  background: #cccccc;
`;
